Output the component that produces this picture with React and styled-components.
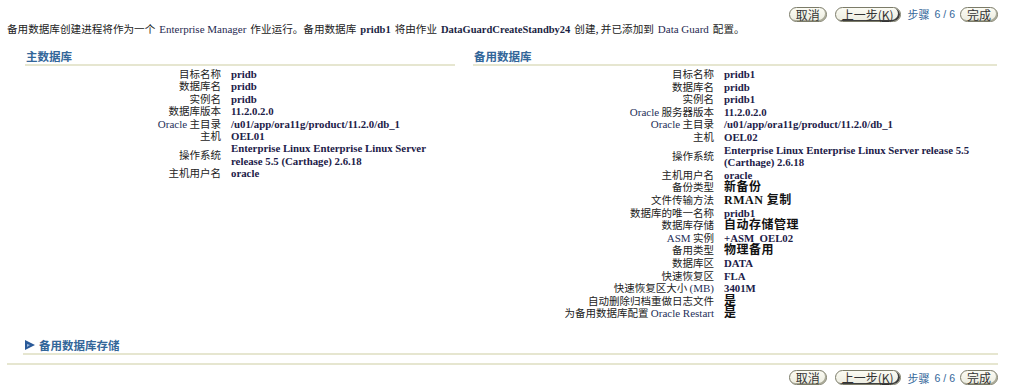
import React from 'react'
import styled, { createGlobalStyle } from 'styled-components'

const GlobalStyle = createGlobalStyle`
  body {
    margin: 0;
    background: #ffffff;
    font-family: "Liberation Serif", "Noto Sans CJK SC", serif;
    font-size: 11px;
    color: #222222;
  }
`

const Page = styled.div`
  width: 1024px;
  min-height: 389px;
  display: flex;
  flex-direction: column;

  & > * {
    flex-shrink: 0;
  }
`

const ButtonBar = styled.div`
  display: flex;
  justify-content: flex-end;
  align-items: center;
  gap: 5px;
  padding: ${p => p.$top}px 26px 0 0;
  height: 16px;
`

const Btn = styled.button`
  height: 15px;
  padding: 0 6px;
  font-family: "Noto Sans CJK SC", "Liberation Sans", sans-serif;
  font-size: 12px;
  line-height: 13px;
  color: #333333;
  background: linear-gradient(#fbfbf3, #ecece0);
  border: 1px solid #7b7b68;
  border-radius: 8px;
  box-shadow: ${p => (p.$default ? 'inset -2px -1px 0 #3f3f3f' : 'inset -1px -1px 0 #a8a896')};
  cursor: pointer;
  margin-left: ${p => p.$gap || 0}px;

  u {
    text-decoration: underline;
  }
`

const Step = styled.span`
  color: #336699;
  font-family: "Noto Sans CJK SC", sans-serif;
  font-size: 11px;
  display: flex;
  align-items: center;
  gap: 5px;
  margin-left: 2px;

  b {
    font-family: "Liberation Sans", sans-serif;
    font-weight: normal;
    font-size: 10.5px;
  }
`

const Intro = styled.p`
  margin: 0 0 0 7px;
  height: 14px;
  line-height: 14px;
  font-family: "Noto Sans CJK SC", sans-serif;
  font-size: 10.6px;
  color: #222;
  white-space: nowrap;

  em, strong {
    line-height: 1;
    margin: 0 4px;
  }
  em {
    font-style: normal;
    font-family: "Liberation Serif", serif;
    font-size: 11px;
    color: #1f2a52;
  }
  strong {
    font-family: "Liberation Serif", serif;
    font-size: 10.5px;
    color: #1b1f44;
  }
`

const Columns = styled.div`
  display: grid;
  grid-template-columns: 430px 524px;
  column-gap: 18px;
  margin: 13px 0 0 25px;
`

const SectionHead = styled.h2`
  margin: 0;
  padding: 0 0 1px 1px;
  height: 14px;
  font-family: "Noto Sans CJK SC", sans-serif;
  font-size: 11.5px;
  font-weight: 700;
  line-height: 14px;
  color: #336699;
  border-bottom: 2px solid #e6e6d0;
  display: flex;
  align-items: center;
  gap: 3px;
`

const Rows = styled.div`
  display: grid;
  grid-template-columns: ${p => p.$label}px ${p => p.$value}px;
  column-gap: 10px;
  align-items: center;
  margin-top: 2px;

  & > div {
    line-height: ${p => p.$pitch}px;
  }
`

const Label = styled.div`
  text-align: right;
  font-family: "Noto Sans CJK SC", sans-serif;
  font-size: 10.5px;
  color: #222;

  span {
    font-family: "Liberation Serif", serif;
    font-size: 11px;
    color: #26305a;
  }
`

const Value = styled.div`
  font-family: "Liberation Serif", "Noto Sans CJK SC", serif;
  font-weight: 700;
  font-size: ${p => (p.$cjk ? 12 : 10.8)}px;
  color: ${p => (p.$cjk ? '#111111' : '#1c2048')};
  letter-spacing: ${p => (p.$cjk ? 0.5 : 0)}px;
`

const Storage = styled.div`
  margin: 18px 26px 0 23px;
`

const BottomRule = styled.div`
  margin: 8px 26px 0 7px;
  border-top: 2px solid #e6e6d0;
`

const Triangle = () => (
  <svg width="12" height="12" viewBox="0 0 12 12">
    <polygon points="1,1 11,6 1,11" fill="#2a5a99" />
    <polygon points="3,5 6,6 3,8" fill="#9ab8dd" />
  </svg>
)

const primary = [
  ['目标名称', 'pridb'],
  ['数据库名', 'pridb'],
  ['实例名', 'pridb'],
  ['数据库版本', '11.2.0.2.0'],
  [<><span>Oracle</span> 主目录</>, '/u01/app/ora11g/product/11.2.0/db_1'],
  ['主机', 'OEL01'],
  ['操作系统', 'Enterprise Linux Enterprise Linux Server release 5.5 (Carthage)  2.6.18'],
  ['主机用户名', 'oracle'],
]

const standby = [
  ['目标名称', 'pridb1'],
  ['数据库名', 'pridb'],
  ['实例名', 'pridb1'],
  [<><span>Oracle</span> 服务器版本</>, '11.2.0.2.0'],
  [<><span>Oracle</span> 主目录</>, '/u01/app/ora11g/product/11.2.0/db_1'],
  ['主机', 'OEL02'],
  ['操作系统', 'Enterprise Linux Enterprise Linux Server release 5.5 (Carthage)  2.6.18'],
  ['主机用户名', 'oracle'],
  ['备份类型', '新备份', true],
  ['文件传输方法', <>RMAN 复制</>, true],
  ['数据库的唯一名称', 'pridb1'],
  ['数据库存储', '自动存储管理', true],
  [<><span>ASM</span> 实例</>, '+ASM_OEL02'],
  ['备用类型', '物理备用', true],
  ['数据库区', 'DATA'],
  ['快速恢复区', 'FLA'],
  [<>快速恢复区大小 <span>(MB)</span></>, '3401M'],
  ['自动删除归档重做日志文件', '是', true],
  [<>为备用数据库配置 <span>Oracle Restart</span></>, '是', true],
]

const Buttons = ({ top }) => (
  <ButtonBar $top={top}>
    <Btn>取消</Btn>
    <Btn $default $gap={3}>上一步(<u>K</u>)</Btn>
    <Step>步骤 <b>6 / 6</b></Step>
    <Btn>完成</Btn>
  </ButtonBar>
)

const DataTable = ({ rows, label, value, pitch }) => (
  <Rows $label={label} $value={value} $pitch={pitch}>
    {rows.map(([l, v, cjk], i) => (
      <React.Fragment key={i}>
        <Label>{l}</Label>
        <Value $cjk={cjk}>{v}</Value>
      </React.Fragment>
    ))}
  </Rows>
)

export default function App() {
  return (
    <Page>
      <GlobalStyle />
      <Buttons top={6} />
      <Intro>
        备用数据库创建进程将作为一个<em>Enterprise Manager</em>作业运行。备用数据库<strong>pridb1</strong>将由作业<strong>DataGuardCreateStandby24</strong>创建, 并已添加到<em>Data Guard</em>配置。
      </Intro>
      <Columns>
        <section>
          <SectionHead>主数据库</SectionHead>
          <DataTable rows={primary} label={196} value={200} pitch={12.4} />
        </section>
        <section>
          <SectionHead>备用数据库</SectionHead>
          <DataTable rows={standby} label={241} value={250} pitch={12.6} />
        </section>
      </Columns>
      <Storage>
        <SectionHead><Triangle />备用数据库存储</SectionHead>
      </Storage>
      <BottomRule />
      <Buttons top={5} />
    </Page>
  )
}
